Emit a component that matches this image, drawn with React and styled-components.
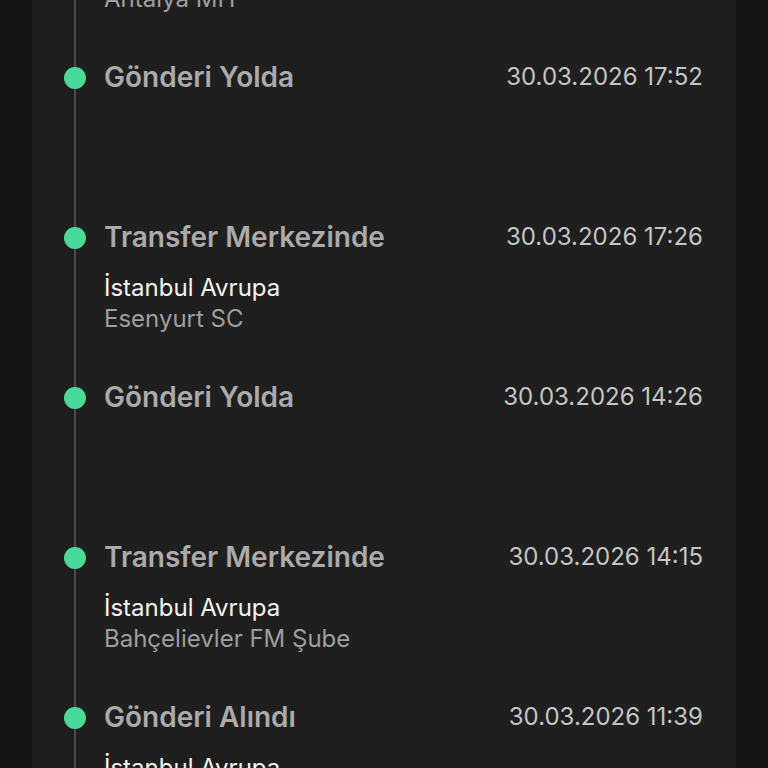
import React from "react";
import styled, { createGlobalStyle } from "styled-components";

const events = [
    { title: "Gönderi Yolda", date: "30.03.2026 18:05", city: "Antalya", branch: "Antalya MH" },
    { title: "Gönderi Yolda", date: "30.03.2026 17:52" },
    { title: "Transfer Merkezinde", date: "30.03.2026 17:26", city: "İstanbul Avrupa", branch: "Esenyurt SC" },
    { title: "Gönderi Yolda", date: "30.03.2026 14:26" },
    { title: "Transfer Merkezinde", date: "30.03.2026 14:15", city: "İstanbul Avrupa", branch: "Bahçelievler FM Şube" },
    { title: "Gönderi Alındı", date: "30.03.2026 11:39", city: "İstanbul Avrupa", branch: "Bahçelievler FM Şube" },
];

function App() {
    return (
        <Page>
            <GlobalStyle />
            <Card>
                <Timeline>
                    {events.map((ev, i) => (
                        <Item key={i}>
                            <Dot />
                            <Head>
                                <Title>{ev.title}</Title>
                                <Time>{ev.date}</Time>
                            </Head>
                            {ev.city && <City>{ev.city}</City>}
                            {ev.branch && <Branch>{ev.branch}</Branch>}
                        </Item>
                    ))}
                </Timeline>
            </Card>
        </Page>
    );
}

export default App;

const GlobalStyle = createGlobalStyle`
    html, body {
        margin: 0;
        padding: 0;
        background: #131416;
        font-family: Inter, "Noto Sans", sans-serif;
    }
`;

const Page = styled.div`
    height: 768px;
    overflow: hidden;
    padding: 0 32px;
    background: #131416;
`;

const Card = styled.div`
    height: 100%;
    background: #1f1f1f;
    overflow: hidden;
`;

// list is scrolled: the first entry sits mostly above the fold
const Timeline = styled.div`
    margin: -99px 0 0 42px;
    padding-right: 33px;
    border-left: 2px solid #4a4a4a;
`;

const Item = styled.div`
    position: relative;
    height: 160px;
    padding-left: 28px;
    box-sizing: border-box;
`;

const Dot = styled.span`
    position: absolute;
    left: -12px;
    top: 6px;
    width: 22px;
    height: 22px;
    border-radius: 50%;
    background: #4bd99b;
`;

const Head = styled.div`
    display: flex;
    justify-content: space-between;
    align-items: center;
    height: 32px;
`;

const Title = styled.span`
    font-size: 28px;
    line-height: 32px;
    font-weight: 600;
    color: #aaaaaa;
`;

const Time = styled.span`
    font-size: 24px;
    line-height: 30px;
    color: #c4c4c4;
`;

const City = styled.div`
    margin-top: 19px;
    font-size: 24px;
    line-height: 31px;
    color: #f4f4f4;
`;

const Branch = styled.div`
    font-size: 24px;
    line-height: 31px;
    color: #9e9e9e;
`;
